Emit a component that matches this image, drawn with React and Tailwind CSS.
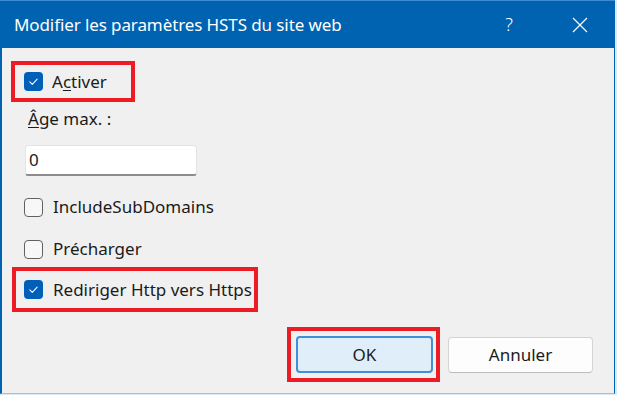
import React from 'react';

const font = { fontFamily: '"Noto Sans", "Open Sans", sans-serif' };

function CheckBox({ checked }) {
  if (checked) {
    return (
      <span className="w-[19px] h-[19px] rounded-[4px] bg-[#005fb8] flex items-center justify-center shrink-0">
        <svg width="13" height="13" viewBox="0 0 16 16" fill="none">
          <path d="M3.5 8.5l3 3L12.5 5" stroke="#ffffff" strokeWidth="1.3" strokeLinecap="round" strokeLinejoin="round" />
        </svg>
      </span>
    );
  }
  return <span className="w-[19px] h-[19px] rounded-[4px] border border-[#616161] bg-[#f7f7f7] shrink-0" />;
}

export default function App() {
  return (
    <div className="w-[617px] h-[395px] bg-[#dbe8f5] text-[#1b1b1b]" style={font}>
      <div className="w-[615px] h-[394px] bg-[#f0f0f0] border-l-2 border-r border-b border-l-[#0063b1] border-r-[#0063b1] border-b-[#9dc1e6] flex flex-col">
        {/* title bar */}
        <div className="h-[48px] -ml-[2px] w-[615px] bg-[#0063b1] border-t border-[#3d8bd0] flex items-center text-white shrink-0">
          <span className="ml-[14px] text-[17px] tracking-[-0.1px]">Modifier les paramètres HSTS du site web</span>
          <span className="ml-auto mr-[59px] text-[18px] font-light">?</span>
          <svg className="mr-[27px]" width="16" height="16" viewBox="0 0 16 16">
            <path d="M1 1L15 15M15 1L1 15" stroke="#ffffff" strokeWidth="1.2" />
          </svg>
        </div>

        <div className="flex flex-col text-[17px]">
          <div className="mt-[13px] ml-[9px] w-[124px] h-[41px] border-4 border-[#ed1c24] flex items-center pl-[9px] gap-[9px]">
            <CheckBox checked />
            <span>A<u className="underline-offset-2">c</u>tiver</span>
          </div>

          <div className="mt-[5px] ml-[26px] h-[24px] leading-[24px]">
            <u className="underline-offset-2">Â</u>ge max. :
          </div>

          <div className="mt-[14px] ml-[23px] w-[172px] h-[31px] bg-white rounded-[3px] border border-[#e3e3e3] border-b-2 border-b-[#8c8c8c] flex items-center pl-[3px] text-[17px]">
            0
          </div>

          <div className="mt-[21px] ml-[22px] h-[20px] flex items-center gap-[10px]">
            <CheckBox />
            <span>IncludeSubDomains</span>
          </div>

          <div className="mt-[22px] ml-[22px] h-[20px] flex items-center gap-[10px]">
            <CheckBox />
            <span>Précharger</span>
          </div>

          <div className="mt-[8px] ml-[10px] w-[246px] h-[45px] border-4 border-[#ed1c24] flex items-center pl-[8px] gap-[10px]">
            <CheckBox checked />
            <span>Rediriger Http vers Https</span>
          </div>

          <div className="mt-[15px] ml-[285px] flex items-start">
            <div className="w-[153px] h-[55px] border-4 border-[#ed1c24] pt-[5px] pl-[5px]">
              <button className="w-[137px] h-[37px] rounded-[4px] bg-[#e0eef9] border-2 border-[#3f8fd9] flex items-center justify-center text-[17px]">
                OK
              </button>
            </div>
            <button className="ml-[8px] mt-[10px] w-[145px] h-[36px] rounded-[4px] bg-[#fdfdfd] border border-[#d4d4d4] border-b-[#bcbcbc] flex items-center justify-center text-[17px]">
              Annuler
            </button>
          </div>
        </div>
      </div>
    </div>
  );
}
